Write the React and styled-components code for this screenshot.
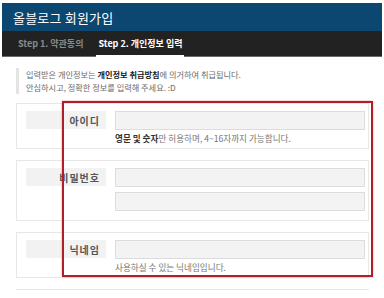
import React from "react";
import styled, { createGlobalStyle } from "styled-components";

const Global = createGlobalStyle`
  html, body { margin: 0; padding: 0; background: #fff; }
  body { font-family: "Noto Sans CJK KR", "Noto Sans", sans-serif; }
  * { box-sizing: border-box; }
`;

const Page = styled.div`
  position: relative;
  width: 380px;
  margin: 3px 2px 0;
`;

const Header = styled.header`
  height: 28px;
  background: #0b4770;
  color: #fff;
  display: flex;
  align-items: center;
  padding-left: 11px;
  font-size: 13px;
  letter-spacing: 0.2px;
`;

const TabBar = styled.nav`
  height: 26px;
  background: #222222;
  display: flex;
  align-items: stretch;
  padding-left: 14px;
  gap: 11px;
  border-bottom: 1px solid #6a6a6a;
`;

const Tab = styled.div`
  display: flex;
  align-items: center;
  padding: 0 2px;
  font-size: 9px;
  font-weight: 700;
  color: ${(p) => (p.$active ? "#ffffff" : "#8a8a8a")};
  border-bottom: 2px solid ${(p) => (p.$active ? "#ffffff" : "transparent")};
  margin-bottom: -1px;
`;

const Notice = styled.div`
  margin: 11px 0 0 14px;
  border-left: 3px solid #e4e4e4;
  padding-left: 7px;
  font-size: 8.2px;
  line-height: 13px;
  color: #6a6a6a;
  b { color: #222; font-weight: 700; }
`;

const Form = styled.div`
  margin: 9px 13px 0 14px;
  display: flex;
  flex-direction: column;
  gap: 11px;
`;

const Row = styled.div`
  border: 1px solid #e7e7e7;
  padding: 7px 3px ${(p) => (p.$hint ? "4px" : "9px")} 9px;
  display: grid;
  grid-template-columns: 80px 1fr;
  column-gap: 9px;
  align-items: start;
`;

const Label = styled.div`
  height: 18px;
  background: #f2f2f2;
  display: flex;
  align-items: center;
  justify-content: flex-end;
  padding-right: 6px;
  font-size: 10px;
  font-weight: 700;
  letter-spacing: 1px;
  color: #555;
`;

const Fields = styled.div`
  display: flex;
  flex-direction: column;
  gap: 5px;
`;

const Input = styled.div`
  height: 19px;
  background: #f3f3f3;
  border: 1px solid #dcdcdc;
`;

const Hint = styled.div`
  margin-top: -2px;
  font-size: 8.6px;
  line-height: 11px;
  color: #777;
  b { color: #333; font-weight: 700; }
`;

const BottomLine = styled.div`
  border-top: 1px solid #e7e7e7;
`;

const Highlight = styled.div`
  position: absolute;
  left: 60px;
  top: 98px;
  width: 311px;
  height: 176px;
  border: 2px solid #b01e27;
  box-shadow: 0 0 2px rgba(200, 40, 40, 0.45);
  pointer-events: none;
`;

export default function App() {
  return (
    <>
      <Global />
      <Page>
        <Header>올블로그 회원가입</Header>
        <TabBar>
          <Tab>Step 1. 약관동의</Tab>
          <Tab $active>Step 2. 개인정보 입력</Tab>
        </TabBar>
        <Notice>
          입력받은 개인정보는 <b>개인정보 취급방침</b>에 의거하여 취급됩니다.
          <br />
          안심하시고, 정확한 정보를 입력해 주세요. :D
        </Notice>
        <Form>
          <Row $hint>
            <Label>아이디</Label>
            <Fields>
              <Input />
              <Hint>
                <b>영문 및 숫자</b>만 허용하며, 4~16자까지 가능합니다.
              </Hint>
            </Fields>
          </Row>
          <Row>
            <Label>비밀번호</Label>
            <Fields>
              <Input />
              <Input />
            </Fields>
          </Row>
          <Row $hint>
            <Label>닉네임</Label>
            <Fields>
              <Input />
              <Hint>사용하실 수 있는 닉네임입니다.</Hint>
            </Fields>
          </Row>
          <BottomLine />
        </Form>
        <Highlight />
      </Page>
    </>
  );
}
